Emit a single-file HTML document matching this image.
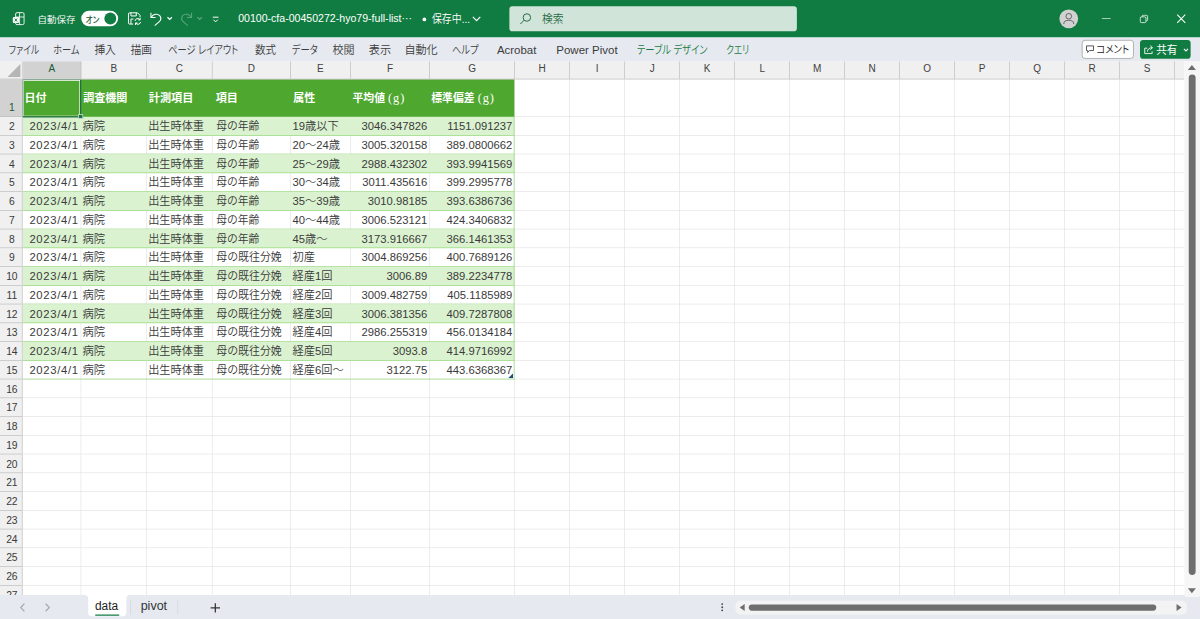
<!DOCTYPE html>
<html lang="ja">
<head>
<meta charset="utf-8">
<title>Excel</title>
<style>
html,body{margin:0;padding:0;background:#fff;}
body{width:1200px;height:619px;overflow:hidden;position:relative;
  font-family:"Liberation Sans","Noto Sans CJK JP",sans-serif;}
#stage{position:absolute;left:0;top:0;width:1920px;height:991px;transform:scale(0.625);
  transform-origin:0 0;overflow:hidden;background:#fff;}
#stage div,#stage svg{position:absolute;box-sizing:border-box;white-space:nowrap;}
.sf{font-family:"Liberation Serif",serif;font-size:20.5px;letter-spacing:1.5px;line-height:0;font-weight:normal;}
.t{line-height:1;transform-origin:0 0;}
#title{left:0;top:0;width:1920px;height:60px;background:#107c41;color:#fff;}
#rib{left:0;top:60px;width:1920px;height:38px;background:#e6eaf0;color:#3b3b3b;}
#colhdr{left:0;top:98px;width:1895px;height:29px;background:#f0f0f0;border-bottom:1px solid #b9b9b9;}
.ch{top:0;height:28px;border-right:1px solid #b9b9b9;font-size:16px;color:#404040;text-align:center;line-height:24px;}
#rowhdr{left:0;top:126px;width:36px;height:826px;background:#f0f0f0;border-right:1px solid #b9b9b9;}
.rh{left:0;width:35px;padding-left:3px;border-bottom:1px solid #b9b9b9;font-size:16.5px;color:#3a3a3a;text-align:center;}
.vl{top:126px;width:1px;height:826px;background:#e1e1e1;}
.hl{left:36px;height:1px;width:1859px;background:#e1e1e1;}
#cells{left:0;top:0;color:#3a3a3a;}
#thead{left:0;top:0;color:#fff;}
#bot{left:0;top:952px;width:1920px;height:39px;background:#e6eaf0;}
</style>
</head>
<body>
<div id="stage">

<!-- worksheet grid -->
<div class="vl" style="left:129px"></div>
<div class="vl" style="left:234px"></div>
<div class="vl" style="left:339px"></div>
<div class="vl" style="left:464px"></div>
<div class="vl" style="left:560px"></div>
<div class="vl" style="left:687px"></div>
<div class="vl" style="left:823px"></div>
<div class="vl" style="left:911px"></div>
<div class="vl" style="left:999px"></div>
<div class="vl" style="left:1087px"></div>
<div class="vl" style="left:1175px"></div>
<div class="vl" style="left:1263px"></div>
<div class="vl" style="left:1351px"></div>
<div class="vl" style="left:1439px"></div>
<div class="vl" style="left:1527px"></div>
<div class="vl" style="left:1615px"></div>
<div class="vl" style="left:1703px"></div>
<div class="vl" style="left:1791px"></div>
<div class="vl" style="left:1879px"></div>
<div class="hl" style="top:186px"></div>
<div class="hl" style="top:216px"></div>
<div class="hl" style="top:246px"></div>
<div class="hl" style="top:276px"></div>
<div class="hl" style="top:306px"></div>
<div class="hl" style="top:336px"></div>
<div class="hl" style="top:366px"></div>
<div class="hl" style="top:396px"></div>
<div class="hl" style="top:426px"></div>
<div class="hl" style="top:456px"></div>
<div class="hl" style="top:486px"></div>
<div class="hl" style="top:516px"></div>
<div class="hl" style="top:546px"></div>
<div class="hl" style="top:576px"></div>
<div class="hl" style="top:606px"></div>
<div class="hl" style="top:636px"></div>
<div class="hl" style="top:666px"></div>
<div class="hl" style="top:696px"></div>
<div class="hl" style="top:726px"></div>
<div class="hl" style="top:756px"></div>
<div class="hl" style="top:786px"></div>
<div class="hl" style="top:816px"></div>
<div class="hl" style="top:846px"></div>
<div class="hl" style="top:876px"></div>
<div class="hl" style="top:906px"></div>
<div class="hl" style="top:936px"></div>
<div style="left:36px;top:126px;width:787px;height:61px;background:#4ea72e"></div>
<div style="left:36px;top:187px;width:787px;height:30px;background:#daf2d0"></div>
<div style="left:36px;top:216px;width:787px;height:1px;background:#8ed973"></div>
<div style="left:36px;top:246px;width:787px;height:1px;background:#8ed973"></div>
<div style="left:36px;top:247px;width:787px;height:30px;background:#daf2d0"></div>
<div style="left:36px;top:276px;width:787px;height:1px;background:#8ed973"></div>
<div style="left:36px;top:306px;width:787px;height:1px;background:#8ed973"></div>
<div style="left:36px;top:307px;width:787px;height:30px;background:#daf2d0"></div>
<div style="left:36px;top:336px;width:787px;height:1px;background:#8ed973"></div>
<div style="left:36px;top:366px;width:787px;height:1px;background:#8ed973"></div>
<div style="left:36px;top:367px;width:787px;height:30px;background:#daf2d0"></div>
<div style="left:36px;top:396px;width:787px;height:1px;background:#8ed973"></div>
<div style="left:36px;top:426px;width:787px;height:1px;background:#8ed973"></div>
<div style="left:36px;top:427px;width:787px;height:30px;background:#daf2d0"></div>
<div style="left:36px;top:456px;width:787px;height:1px;background:#8ed973"></div>
<div style="left:36px;top:486px;width:787px;height:1px;background:#8ed973"></div>
<div style="left:36px;top:487px;width:787px;height:30px;background:#daf2d0"></div>
<div style="left:36px;top:516px;width:787px;height:1px;background:#8ed973"></div>
<div style="left:36px;top:546px;width:787px;height:1px;background:#8ed973"></div>
<div style="left:36px;top:547px;width:787px;height:30px;background:#daf2d0"></div>
<div style="left:36px;top:576px;width:787px;height:1px;background:#8ed973"></div>
<div style="left:36px;top:606px;width:787px;height:1px;background:#8ed973"></div>
<div style="left:822px;top:187px;width:1px;height:420px;background:#8ed973"></div>
<div id="thead">
<div class="t" style="left:39.3px;top:147.8px;transform:scaleX(0.979);font-size:18px;font-weight:bold;">日付</div>
<div class="t" style="left:133.4px;top:147.8px;transform:scaleX(0.983);font-size:18px;font-weight:bold;">調査機関</div>
<div class="t" style="left:238.4px;top:147.8px;transform:scaleX(0.992);font-size:18px;font-weight:bold;">計測項目</div>
<div class="t" style="left:344.6px;top:147.8px;transform:scaleX(0.988);font-size:18px;font-weight:bold;">項目</div>
<div class="t" style="left:468.8px;top:147.8px;transform:scaleX(0.978);font-size:18px;font-weight:bold;">属性</div>
<div class="t" style="left:563.8px;top:147.8px;transform:scaleX(0.964);font-size:18px;font-weight:bold;">平均値 <span class="sf">(g)</span></div>
<div class="t" style="left:690.2px;top:147.8px;transform:scaleX(0.966);font-size:18px;font-weight:bold;">標準偏差 <span class="sf">(g)</span></div>
</div>
<div id="cells">
<div class="t" style="left:47.0px;top:192.5px;letter-spacing:1.12px;font-size:18px;font-weight:350;">2023/4/1</div>
<div class="t" style="left:131.8px;top:192.5px;transform:scaleX(1.007);font-size:18px;font-weight:350;">病院</div>
<div class="t" style="left:237.4px;top:192.5px;transform:scaleX(0.993);font-size:18px;font-weight:350;">出生時体重</div>
<div class="t" style="left:345.6px;top:192.5px;transform:scaleX(0.956);font-size:18px;font-weight:350;">母の年齢</div>
<div class="t" style="left:468px;top:192.5px;font-size:18px;font-weight:350">19歳以下</div>
<div class="t" style="left:560px;top:192.5px;width:123.5px;text-align:right;font-size:18px;font-weight:350">3046.347826</div>
<div class="t" style="left:687px;top:192.5px;width:132.5px;text-align:right;font-size:18px;font-weight:350">1151.091237</div>
<div class="t" style="left:47.0px;top:222.5px;letter-spacing:1.12px;font-size:18px;font-weight:350;">2023/4/1</div>
<div class="t" style="left:131.8px;top:222.5px;transform:scaleX(1.007);font-size:18px;font-weight:350;">病院</div>
<div class="t" style="left:237.4px;top:222.5px;transform:scaleX(0.993);font-size:18px;font-weight:350;">出生時体重</div>
<div class="t" style="left:345.6px;top:222.5px;transform:scaleX(0.956);font-size:18px;font-weight:350;">母の年齢</div>
<div class="t" style="left:468px;top:222.5px;font-size:18px;font-weight:350">20～24歳</div>
<div class="t" style="left:560px;top:222.5px;width:123.5px;text-align:right;font-size:18px;font-weight:350">3005.320158</div>
<div class="t" style="left:687px;top:222.5px;width:132.5px;text-align:right;font-size:18px;font-weight:350">389.0800662</div>
<div class="t" style="left:47.0px;top:252.5px;letter-spacing:1.12px;font-size:18px;font-weight:350;">2023/4/1</div>
<div class="t" style="left:131.8px;top:252.5px;transform:scaleX(1.007);font-size:18px;font-weight:350;">病院</div>
<div class="t" style="left:237.4px;top:252.5px;transform:scaleX(0.993);font-size:18px;font-weight:350;">出生時体重</div>
<div class="t" style="left:345.6px;top:252.5px;transform:scaleX(0.956);font-size:18px;font-weight:350;">母の年齢</div>
<div class="t" style="left:468px;top:252.5px;font-size:18px;font-weight:350">25～29歳</div>
<div class="t" style="left:560px;top:252.5px;width:123.5px;text-align:right;font-size:18px;font-weight:350">2988.432302</div>
<div class="t" style="left:687px;top:252.5px;width:132.5px;text-align:right;font-size:18px;font-weight:350">393.9941569</div>
<div class="t" style="left:47.0px;top:282.5px;letter-spacing:1.12px;font-size:18px;font-weight:350;">2023/4/1</div>
<div class="t" style="left:131.8px;top:282.5px;transform:scaleX(1.007);font-size:18px;font-weight:350;">病院</div>
<div class="t" style="left:237.4px;top:282.5px;transform:scaleX(0.993);font-size:18px;font-weight:350;">出生時体重</div>
<div class="t" style="left:345.6px;top:282.5px;transform:scaleX(0.956);font-size:18px;font-weight:350;">母の年齢</div>
<div class="t" style="left:468px;top:282.5px;font-size:18px;font-weight:350">30～34歳</div>
<div class="t" style="left:560px;top:282.5px;width:123.5px;text-align:right;font-size:18px;font-weight:350">3011.435616</div>
<div class="t" style="left:687px;top:282.5px;width:132.5px;text-align:right;font-size:18px;font-weight:350">399.2995778</div>
<div class="t" style="left:47.0px;top:312.5px;letter-spacing:1.12px;font-size:18px;font-weight:350;">2023/4/1</div>
<div class="t" style="left:131.8px;top:312.5px;transform:scaleX(1.007);font-size:18px;font-weight:350;">病院</div>
<div class="t" style="left:237.4px;top:312.5px;transform:scaleX(0.993);font-size:18px;font-weight:350;">出生時体重</div>
<div class="t" style="left:345.6px;top:312.5px;transform:scaleX(0.956);font-size:18px;font-weight:350;">母の年齢</div>
<div class="t" style="left:468px;top:312.5px;font-size:18px;font-weight:350">35～39歳</div>
<div class="t" style="left:560px;top:312.5px;width:123.5px;text-align:right;font-size:18px;font-weight:350">3010.98185</div>
<div class="t" style="left:687px;top:312.5px;width:132.5px;text-align:right;font-size:18px;font-weight:350">393.6386736</div>
<div class="t" style="left:47.0px;top:342.5px;letter-spacing:1.12px;font-size:18px;font-weight:350;">2023/4/1</div>
<div class="t" style="left:131.8px;top:342.5px;transform:scaleX(1.007);font-size:18px;font-weight:350;">病院</div>
<div class="t" style="left:237.4px;top:342.5px;transform:scaleX(0.993);font-size:18px;font-weight:350;">出生時体重</div>
<div class="t" style="left:345.6px;top:342.5px;transform:scaleX(0.956);font-size:18px;font-weight:350;">母の年齢</div>
<div class="t" style="left:468px;top:342.5px;font-size:18px;font-weight:350">40～44歳</div>
<div class="t" style="left:560px;top:342.5px;width:123.5px;text-align:right;font-size:18px;font-weight:350">3006.523121</div>
<div class="t" style="left:687px;top:342.5px;width:132.5px;text-align:right;font-size:18px;font-weight:350">424.3406832</div>
<div class="t" style="left:47.0px;top:372.5px;letter-spacing:1.12px;font-size:18px;font-weight:350;">2023/4/1</div>
<div class="t" style="left:131.8px;top:372.5px;transform:scaleX(1.007);font-size:18px;font-weight:350;">病院</div>
<div class="t" style="left:237.4px;top:372.5px;transform:scaleX(0.993);font-size:18px;font-weight:350;">出生時体重</div>
<div class="t" style="left:345.6px;top:372.5px;transform:scaleX(0.956);font-size:18px;font-weight:350;">母の年齢</div>
<div class="t" style="left:468px;top:372.5px;font-size:18px;font-weight:350">45歳～</div>
<div class="t" style="left:560px;top:372.5px;width:123.5px;text-align:right;font-size:18px;font-weight:350">3173.916667</div>
<div class="t" style="left:687px;top:372.5px;width:132.5px;text-align:right;font-size:18px;font-weight:350">366.1461353</div>
<div class="t" style="left:47.0px;top:402.5px;letter-spacing:1.12px;font-size:18px;font-weight:350;">2023/4/1</div>
<div class="t" style="left:131.8px;top:402.5px;transform:scaleX(1.007);font-size:18px;font-weight:350;">病院</div>
<div class="t" style="left:237.4px;top:402.5px;transform:scaleX(0.993);font-size:18px;font-weight:350;">出生時体重</div>
<div class="t" style="left:345.6px;top:402.5px;transform:scaleX(0.970);font-size:18px;font-weight:350;">母の既往分娩</div>
<div class="t" style="left:468px;top:402.5px;font-size:18px;font-weight:350">初産</div>
<div class="t" style="left:560px;top:402.5px;width:123.5px;text-align:right;font-size:18px;font-weight:350">3004.869256</div>
<div class="t" style="left:687px;top:402.5px;width:132.5px;text-align:right;font-size:18px;font-weight:350">400.7689126</div>
<div class="t" style="left:47.0px;top:432.5px;letter-spacing:1.12px;font-size:18px;font-weight:350;">2023/4/1</div>
<div class="t" style="left:131.8px;top:432.5px;transform:scaleX(1.007);font-size:18px;font-weight:350;">病院</div>
<div class="t" style="left:237.4px;top:432.5px;transform:scaleX(0.993);font-size:18px;font-weight:350;">出生時体重</div>
<div class="t" style="left:345.6px;top:432.5px;transform:scaleX(0.970);font-size:18px;font-weight:350;">母の既往分娩</div>
<div class="t" style="left:468px;top:432.5px;font-size:18px;font-weight:350">経産1回</div>
<div class="t" style="left:560px;top:432.5px;width:123.5px;text-align:right;font-size:18px;font-weight:350">3006.89</div>
<div class="t" style="left:687px;top:432.5px;width:132.5px;text-align:right;font-size:18px;font-weight:350">389.2234778</div>
<div class="t" style="left:47.0px;top:462.5px;letter-spacing:1.12px;font-size:18px;font-weight:350;">2023/4/1</div>
<div class="t" style="left:131.8px;top:462.5px;transform:scaleX(1.007);font-size:18px;font-weight:350;">病院</div>
<div class="t" style="left:237.4px;top:462.5px;transform:scaleX(0.993);font-size:18px;font-weight:350;">出生時体重</div>
<div class="t" style="left:345.6px;top:462.5px;transform:scaleX(0.970);font-size:18px;font-weight:350;">母の既往分娩</div>
<div class="t" style="left:468px;top:462.5px;font-size:18px;font-weight:350">経産2回</div>
<div class="t" style="left:560px;top:462.5px;width:123.5px;text-align:right;font-size:18px;font-weight:350">3009.482759</div>
<div class="t" style="left:687px;top:462.5px;width:132.5px;text-align:right;font-size:18px;font-weight:350">405.1185989</div>
<div class="t" style="left:47.0px;top:492.5px;letter-spacing:1.12px;font-size:18px;font-weight:350;">2023/4/1</div>
<div class="t" style="left:131.8px;top:492.5px;transform:scaleX(1.007);font-size:18px;font-weight:350;">病院</div>
<div class="t" style="left:237.4px;top:492.5px;transform:scaleX(0.993);font-size:18px;font-weight:350;">出生時体重</div>
<div class="t" style="left:345.6px;top:492.5px;transform:scaleX(0.970);font-size:18px;font-weight:350;">母の既往分娩</div>
<div class="t" style="left:468px;top:492.5px;font-size:18px;font-weight:350">経産3回</div>
<div class="t" style="left:560px;top:492.5px;width:123.5px;text-align:right;font-size:18px;font-weight:350">3006.381356</div>
<div class="t" style="left:687px;top:492.5px;width:132.5px;text-align:right;font-size:18px;font-weight:350">409.7287808</div>
<div class="t" style="left:47.0px;top:522.5px;letter-spacing:1.12px;font-size:18px;font-weight:350;">2023/4/1</div>
<div class="t" style="left:131.8px;top:522.5px;transform:scaleX(1.007);font-size:18px;font-weight:350;">病院</div>
<div class="t" style="left:237.4px;top:522.5px;transform:scaleX(0.993);font-size:18px;font-weight:350;">出生時体重</div>
<div class="t" style="left:345.6px;top:522.5px;transform:scaleX(0.970);font-size:18px;font-weight:350;">母の既往分娩</div>
<div class="t" style="left:468px;top:522.5px;font-size:18px;font-weight:350">経産4回</div>
<div class="t" style="left:560px;top:522.5px;width:123.5px;text-align:right;font-size:18px;font-weight:350">2986.255319</div>
<div class="t" style="left:687px;top:522.5px;width:132.5px;text-align:right;font-size:18px;font-weight:350">456.0134184</div>
<div class="t" style="left:47.0px;top:552.5px;letter-spacing:1.12px;font-size:18px;font-weight:350;">2023/4/1</div>
<div class="t" style="left:131.8px;top:552.5px;transform:scaleX(1.007);font-size:18px;font-weight:350;">病院</div>
<div class="t" style="left:237.4px;top:552.5px;transform:scaleX(0.993);font-size:18px;font-weight:350;">出生時体重</div>
<div class="t" style="left:345.6px;top:552.5px;transform:scaleX(0.970);font-size:18px;font-weight:350;">母の既往分娩</div>
<div class="t" style="left:468px;top:552.5px;font-size:18px;font-weight:350">経産5回</div>
<div class="t" style="left:560px;top:552.5px;width:123.5px;text-align:right;font-size:18px;font-weight:350">3093.8</div>
<div class="t" style="left:687px;top:552.5px;width:132.5px;text-align:right;font-size:18px;font-weight:350">414.9716992</div>
<div class="t" style="left:47.0px;top:582.5px;letter-spacing:1.12px;font-size:18px;font-weight:350;">2023/4/1</div>
<div class="t" style="left:131.8px;top:582.5px;transform:scaleX(1.007);font-size:18px;font-weight:350;">病院</div>
<div class="t" style="left:237.4px;top:582.5px;transform:scaleX(0.993);font-size:18px;font-weight:350;">出生時体重</div>
<div class="t" style="left:345.6px;top:582.5px;transform:scaleX(0.970);font-size:18px;font-weight:350;">母の既往分娩</div>
<div class="t" style="left:468px;top:582.5px;font-size:18px;font-weight:350">経産6回～</div>
<div class="t" style="left:560px;top:582.5px;width:123.5px;text-align:right;font-size:18px;font-weight:350">3122.75</div>
<div class="t" style="left:687px;top:582.5px;width:132.5px;text-align:right;font-size:18px;font-weight:350">443.6368367</div>
</div>
<svg style="left:813px;top:597px" width="8" height="8" viewBox="0 0 8 8"><path d="M8 0V8H0Z" fill="#1f4e79"/></svg>
<div style="left:35px;top:125.5px;width:95px;height:62.5px;border:2px solid #1e7145;box-shadow:inset 0 0 0 1px #fff"></div>
<div style="left:125px;top:182.500px;width:7.500px;height:7.500px;background:#1e7145;border:1px solid #fff"></div>
<div id="colhdr">
<svg style="left:12px;top:4px" width="21" height="21" viewBox="0 0 21 21"><path d="M21 0V21H0Z" fill="#b5b5b5"/></svg>
<div class="ch" style="left:0;width:37px"></div>
<div class="ch" style="left:37px;width:93px;background:#d2d2d2;color:#185c37">A</div>
<div class="ch" style="left:130px;width:105px">B</div>
<div class="ch" style="left:235px;width:105px">C</div>
<div class="ch" style="left:340px;width:125px">D</div>
<div class="ch" style="left:465px;width:96px">E</div>
<div class="ch" style="left:561px;width:127px">F</div>
<div class="ch" style="left:688px;width:136px">G</div>
<div class="ch" style="left:824px;width:88px">H</div>
<div class="ch" style="left:912px;width:88px">I</div>
<div class="ch" style="left:1000px;width:88px">J</div>
<div class="ch" style="left:1088px;width:88px">K</div>
<div class="ch" style="left:1176px;width:88px">L</div>
<div class="ch" style="left:1264px;width:88px">M</div>
<div class="ch" style="left:1352px;width:88px">N</div>
<div class="ch" style="left:1440px;width:88px">O</div>
<div class="ch" style="left:1528px;width:88px">P</div>
<div class="ch" style="left:1616px;width:88px">Q</div>
<div class="ch" style="left:1704px;width:88px">R</div>
<div class="ch" style="left:1792px;width:88px">S</div>
<div class="ch" style="left:1880px;width:30px"></div>
</div>
<div id="rowhdr">
<div class="rh" style="top:0;height:61px;line-height:30px;background:#d2d2d2;color:#185c37;padding-top:31px">1</div>
<div class="rh" style="top:61px;height:30px;line-height:31px">2</div>
<div class="rh" style="top:91px;height:30px;line-height:31px">3</div>
<div class="rh" style="top:121px;height:30px;line-height:31px">4</div>
<div class="rh" style="top:151px;height:30px;line-height:31px">5</div>
<div class="rh" style="top:181px;height:30px;line-height:31px">6</div>
<div class="rh" style="top:211px;height:30px;line-height:31px">7</div>
<div class="rh" style="top:241px;height:30px;line-height:31px">8</div>
<div class="rh" style="top:271px;height:30px;line-height:31px">9</div>
<div class="rh" style="top:301px;height:30px;line-height:31px">10</div>
<div class="rh" style="top:331px;height:30px;line-height:31px">11</div>
<div class="rh" style="top:361px;height:30px;line-height:31px">12</div>
<div class="rh" style="top:391px;height:30px;line-height:31px">13</div>
<div class="rh" style="top:421px;height:30px;line-height:31px">14</div>
<div class="rh" style="top:451px;height:30px;line-height:31px">15</div>
<div class="rh" style="top:481px;height:30px;line-height:31px">16</div>
<div class="rh" style="top:511px;height:30px;line-height:31px">17</div>
<div class="rh" style="top:541px;height:30px;line-height:31px">18</div>
<div class="rh" style="top:571px;height:30px;line-height:31px">19</div>
<div class="rh" style="top:601px;height:30px;line-height:31px">20</div>
<div class="rh" style="top:631px;height:30px;line-height:31px">21</div>
<div class="rh" style="top:661px;height:30px;line-height:31px">22</div>
<div class="rh" style="top:691px;height:30px;line-height:31px">23</div>
<div class="rh" style="top:721px;height:30px;line-height:31px">24</div>
<div class="rh" style="top:751px;height:30px;line-height:31px">25</div>
<div class="rh" style="top:781px;height:30px;line-height:31px">26</div>
<div class="rh" style="top:811px;height:30px;line-height:31px">27</div>
</div>
<div style="left:1895px;top:98px;width:25px;height:854px;background:#f6f6f6"></div>
<svg style="left:1899px;top:102px" width="16" height="12" viewBox="0 0 16 12"><path d="M8 2L14.5 10H1.500Z" fill="#6e6e6e"/></svg>
<div style="left:1902px;top:118.500px;width:10.500px;height:801px;background:#6e6e6e;border-radius:6px"></div>
<svg style="left:1899px;top:938.500px" width="16" height="12" viewBox="0 0 16 12"><path d="M8 10L14.500 2H1.500Z" fill="#6e6e6e"/></svg>
<!-- title bar -->
<div id="title">
<svg style="left:19px;top:19px" width="22" height="22" viewBox="0 0 22 22"><rect x="6" y="1.200" width="13.500" height="19.200" rx="2.200" fill="none" stroke="#fff" stroke-width="1.400"/><path d="M12.300 1.200V20.400M6 8.200H19.500" stroke="#fff" stroke-width="1.300" fill="none"/><rect x="1.500" y="8.200" width="10" height="9.600" rx="1.800" fill="#fff"/><path d="M4.600 10.700L8.400 15.400M8.400 10.700L4.600 15.400" stroke="#107c41" stroke-width="1.500" fill="none"/></svg>
<div class="t" style="left:59.7px;top:22.7px;transform:scaleX(1.015);font-size:15px;font-weight:350;">自動保存</div>
<div style="left:130px;top:17px;width:59px;height:25px;border-radius:13px;background:#fff"></div>
<div class="t" style="left:137.4px;top:23.9px;transform:scaleX(0.867);font-size:14px;font-weight:500;font-feature-settings:'palt';color:#185c37">オン</div>
<div style="left:167px;top:20px;width:19px;height:19px;border-radius:10px;background:#107c41"></div>
<svg style="left:204px;top:19px" width="23" height="21" viewBox="0 0 23 21" fill="none" stroke="#fff" stroke-width="1.600"><path d="M9 19.500H3.500A2 2 0 0 1 1.500 17.500V3.500A2 2 0 0 1 3.500 1.500H16L20 5.500V8.500"/><path d="M5.500 1.500V6.500H14V1.500M5.500 19.500V11.500H9.500"/><path d="M12 14.500A4.300 4.300 0 0 1 19.800 12.500M20.200 9.500V12.800H16.900M21 16A4.300 4.300 0 0 1 13.200 18M12.800 21V17.700H16.100"/></svg>
<svg style="left:239px;top:18px" width="22" height="24" viewBox="0 0 22 24" fill="none" stroke="#fff" stroke-width="1.700"><path d="M2.500 2.500V10H10"/><path d="M3 9.500C6 4.500 12.500 3 16.500 7C19.500 10.500 18.500 14.500 15 17.500L8.500 23"/></svg>
<svg style="left:266px;top:25px" width="11" height="9" viewBox="0 0 11 9" fill="none" stroke="#fff" stroke-width="2"><path d="M2 2.500L5.500 6L9 2.500"/></svg>
<svg style="left:287px;top:18px" width="22" height="24" viewBox="0 0 22 24" fill="none" stroke="#5aa57d" stroke-width="1.700"><path d="M19.500 2.500V10H12"/><path d="M19 9.500C16 4.500 9.500 3 5.500 7C2.500 10.500 3.500 14.500 7 17.500L13.500 23"/></svg>
<svg style="left:314px;top:25px" width="11" height="9" viewBox="0 0 11 9" fill="none" stroke="#5aa57d" stroke-width="2"><path d="M2 2.500L5.500 6L9 2.500"/></svg>
<svg style="left:338px;top:24px" width="14" height="13" viewBox="0 0 14 13" fill="none" stroke="#fff" stroke-width="1.600"><path d="M2.500 3.500H11.500M3.500 7.500L7 11L10.500 7.500"/></svg>
<div class="t" style="left:381.0px;top:19.9px;transform:scaleX(0.940);font-size:18px;">00100-cfa-00450272-hyo79-full-list···</div>
<div style="left:675.500px;top:27.500px;width:6px;height:6px;border-radius:3px;background:#fff"></div>
<div class="t" style="left:690.6px;top:22.1px;transform:scaleX(0.882);font-size:18px;font-weight:350;">保存中...</div>
<svg style="left:755px;top:25px" width="15" height="10" viewBox="0 0 15 10" fill="none" stroke="#fff" stroke-width="1.900"><path d="M1.500 2L7.500 8L13.500 2"/></svg>
<div style="left:815px;top:10px;width:460px;height:40px;border-radius:5px;background:#d0e4d9"></div>
<svg style="left:831px;top:20px" width="20" height="20" viewBox="0 0 20 20" fill="none" stroke="#2a6b47" stroke-width="1.600"><circle cx="12" cy="8" r="6"/><path d="M7.700 12.300L1.500 18.500"/></svg>
<div class="t" style="left:867.2px;top:21.9px;transform:scaleX(0.960);font-size:18px;font-weight:350;color:#2a6b47">検索</div>
<div style="left:1695px;top:15px;width:30px;height:30px;border-radius:15px;background:#d1d1d1"></div>
<svg style="left:1695px;top:15px" width="30" height="30" viewBox="0 0 30 30" fill="none" stroke="#666" stroke-width="1.600"><circle cx="15" cy="11" r="4.500"/><path d="M7 23.500C7 18.500 10.500 17.500 15 17.500C19.500 17.500 23 18.500 23 23.500"/></svg>
<div style="left:1763px;top:28.500px;width:14px;height:1.500px;background:#fff"></div>
<svg style="left:1823px;top:23px" width="15" height="15" viewBox="0 0 17 17" fill="none" stroke="#fff" stroke-width="1.500"><rect x="1.500" y="4.500" width="10.500" height="10.500" rx="2.500"/><path d="M5 4V3.500A2 2 0 0 1 7 1.500H12.500A2.500 2.500 0 0 1 15 4V9.500A2 2 0 0 1 13 11.500H12.500"/></svg>
<svg style="left:1882px;top:22px" width="16" height="16" viewBox="0 0 16 16" fill="none" stroke="#fff" stroke-width="1.700"><path d="M1.500 1.500L14.500 14.500M14.500 1.500L1.500 14.500"/></svg>
</div>
<!-- ribbon tabs -->
<div id="rib">
<div class="t" style="left:14.0px;top:11.3px;transform:scaleX(0.761);font-size:18.5px;font-weight:350;font-feature-settings:'palt';">ファイル</div>
<div class="t" style="left:84.5px;top:11.3px;transform:scaleX(0.797);font-size:18.5px;font-weight:350;font-feature-settings:'palt';">ホーム</div>
<div class="t" style="left:150.6px;top:11.3px;transform:scaleX(0.928);font-size:18.5px;font-weight:350;font-feature-settings:'palt';">挿入</div>
<div class="t" style="left:209.0px;top:11.3px;transform:scaleX(0.919);font-size:18.5px;font-weight:350;font-feature-settings:'palt';">描画</div>
<div class="t" style="left:269.1px;top:11.3px;transform:scaleX(0.798);font-size:18.5px;font-weight:350;font-feature-settings:'palt';">ページ レイアウト</div>
<div class="t" style="left:407.6px;top:11.3px;transform:scaleX(0.911);font-size:18.5px;font-weight:350;font-feature-settings:'palt';">数式</div>
<div class="t" style="left:467.2px;top:11.3px;transform:scaleX(0.800);font-size:18.5px;font-weight:350;font-feature-settings:'palt';">データ</div>
<div class="t" style="left:532.3px;top:11.3px;transform:scaleX(0.955);font-size:18.5px;font-weight:350;font-feature-settings:'palt';">校閲</div>
<div class="t" style="left:589.8px;top:11.3px;transform:scaleX(0.965);font-size:18.5px;font-weight:350;font-feature-settings:'palt';">表示</div>
<div class="t" style="left:647.2px;top:11.3px;transform:scaleX(0.960);font-size:18.5px;font-weight:350;font-feature-settings:'palt';">自動化</div>
<div class="t" style="left:723.2px;top:11.3px;transform:scaleX(0.806);font-size:18.5px;font-weight:350;font-feature-settings:'palt';">ヘルプ</div>
<div class="t" style="left:794.7px;top:11.3px;transform:scaleX(0.990);font-size:18.5px;font-weight:350;font-feature-settings:'palt';">Acrobat</div>
<div class="t" style="left:890.2px;top:11.3px;transform:scaleX(0.996);font-size:18.5px;font-weight:350;font-feature-settings:'palt';">Power Pivot</div>
<div class="t" style="left:1019.2px;top:11.3px;transform:scaleX(0.806);font-size:18.5px;font-weight:350;font-feature-settings:'palt';color:#197a43">テーブル デザイン</div>
<div class="t" style="left:1161.7px;top:11.3px;transform:scaleX(0.741);font-size:18.5px;font-weight:350;font-feature-settings:'palt';color:#197a43">クエリ</div>
<div style="left:1730.500px;top:4px;width:83.500px;height:30px;border:1px solid #8a8a8a;border-radius:5px;background:#fff"></div>
<svg style="left:1736.500px;top:12px" width="14" height="14" viewBox="0 0 15 15" fill="none" stroke="#333" stroke-width="1.400"><path d="M1.500 1.500H13.500V9.500H6.500L3.500 12.800V9.500H1.500Z"/></svg>
<div class="t" style="left:1754.2px;top:11.2px;transform:scaleX(0.891);font-size:17px;font-weight:350;font-feature-settings:'palt';color:#222">コメント</div>
<div style="left:1824px;top:4px;width:81px;height:30px;border-radius:5px;background:#107c41"></div>
<svg style="left:1829.500px;top:11.500px" width="16.500" height="15" viewBox="0 0 13.500 12.500" fill="none" stroke="#fff" stroke-width="1.200"><path d="M4.500 4.200H1.200V11.500H11V8.500"/><path d="M4.800 8.800C4.800 5.800 7.300 3.600 11 3.600M8.600 0.900L11.600 3.600L8.600 6.300"/></svg>
<div class="t" style="left:1850.3px;top:10.7px;transform:scaleX(0.941);font-size:18px;color:#fff">共有</div>
<svg style="left:1892px;top:15px" width="11" height="10" viewBox="0 0 11 10" fill="none" stroke="#fff" stroke-width="1.700"><path d="M2.200 3.200L5.500 6.500L8.800 3.200"/></svg>
</div>
<!-- sheet tabs / scrollbar -->
<div id="bot">
<svg style="left:30px;top:12px" width="12" height="16" viewBox="0 0 12 16" fill="none" stroke="#a6a6a6" stroke-width="1.700"><path d="M9 2L3 8L9 14"/></svg>
<svg style="left:70px;top:12px" width="12" height="16" viewBox="0 0 12 16" fill="none" stroke="#a6a6a6" stroke-width="1.700"><path d="M3 2L9 8L3 14"/></svg>
<div style="left:135px;top:0;width:73px;height:6px;background:#fff"></div>
<div style="left:129px;top:0;width:12px;height:12px;background:#e6eaf0;border-radius:0 6px 0 0"></div>
<div style="left:202px;top:0;width:12px;height:12px;background:#e6eaf0;border-radius:6px 0 0 0"></div>
<div style="left:141px;top:0;width:61px;height:34px;background:#fff;border-radius:0 0 6px 6px"></div>
<div class="t" style="left:152.2px;top:6.5px;transform:scaleX(0.952);font-size:20px;color:#222">data</div>
<div style="left:152px;top:30.500px;width:39px;height:2.500px;background:#107c41;border-radius:2px"></div>
<div style="left:208px;top:9px;width:1px;height:22px;background:#cfd2d8"></div>
<div class="t" style="left:224.6px;top:7.0px;transform:scaleX(1.003);font-size:20px;color:#333">pivot</div>
<div style="left:284px;top:9px;width:1px;height:22px;background:#cfd2d8"></div>
<svg style="left:336px;top:12px" width="17" height="17" viewBox="0 0 17 17" fill="none" stroke="#333" stroke-width="2"><path d="M8.500 1V16M1 8.500H16"/></svg>
<div style="left:1154px;top:13px;width:3px;height:3px;background:#444;border-radius:2px"></div>
<div style="left:1154px;top:18px;width:3px;height:3px;background:#444;border-radius:2px"></div>
<div style="left:1154px;top:23px;width:3px;height:3px;background:#444;border-radius:2px"></div>
<div style="left:1177px;top:9px;width:722px;height:22px;background:#f3f3f3;border-radius:8px"></div>
<svg style="left:1182px;top:13px" width="11" height="14" viewBox="0 0 11 14"><path d="M1.500 7L9.500 1.500V12.500Z" fill="#6e6e6e"/></svg>
<div style="left:1198px;top:15px;width:652px;height:10px;background:#6e6e6e;border-radius:5px"></div>
<svg style="left:1881px;top:13px" width="11" height="14" viewBox="0 0 11 14"><path d="M9.500 7L1.500 1.500V12.500Z" fill="#6e6e6e"/></svg>
<div style="left:1895px;top:0;width:25px;height:2.500px;background:#f6f6f6;border-radius:0 0 6px 6px"></div>
</div>
</div>
</body>
</html>
